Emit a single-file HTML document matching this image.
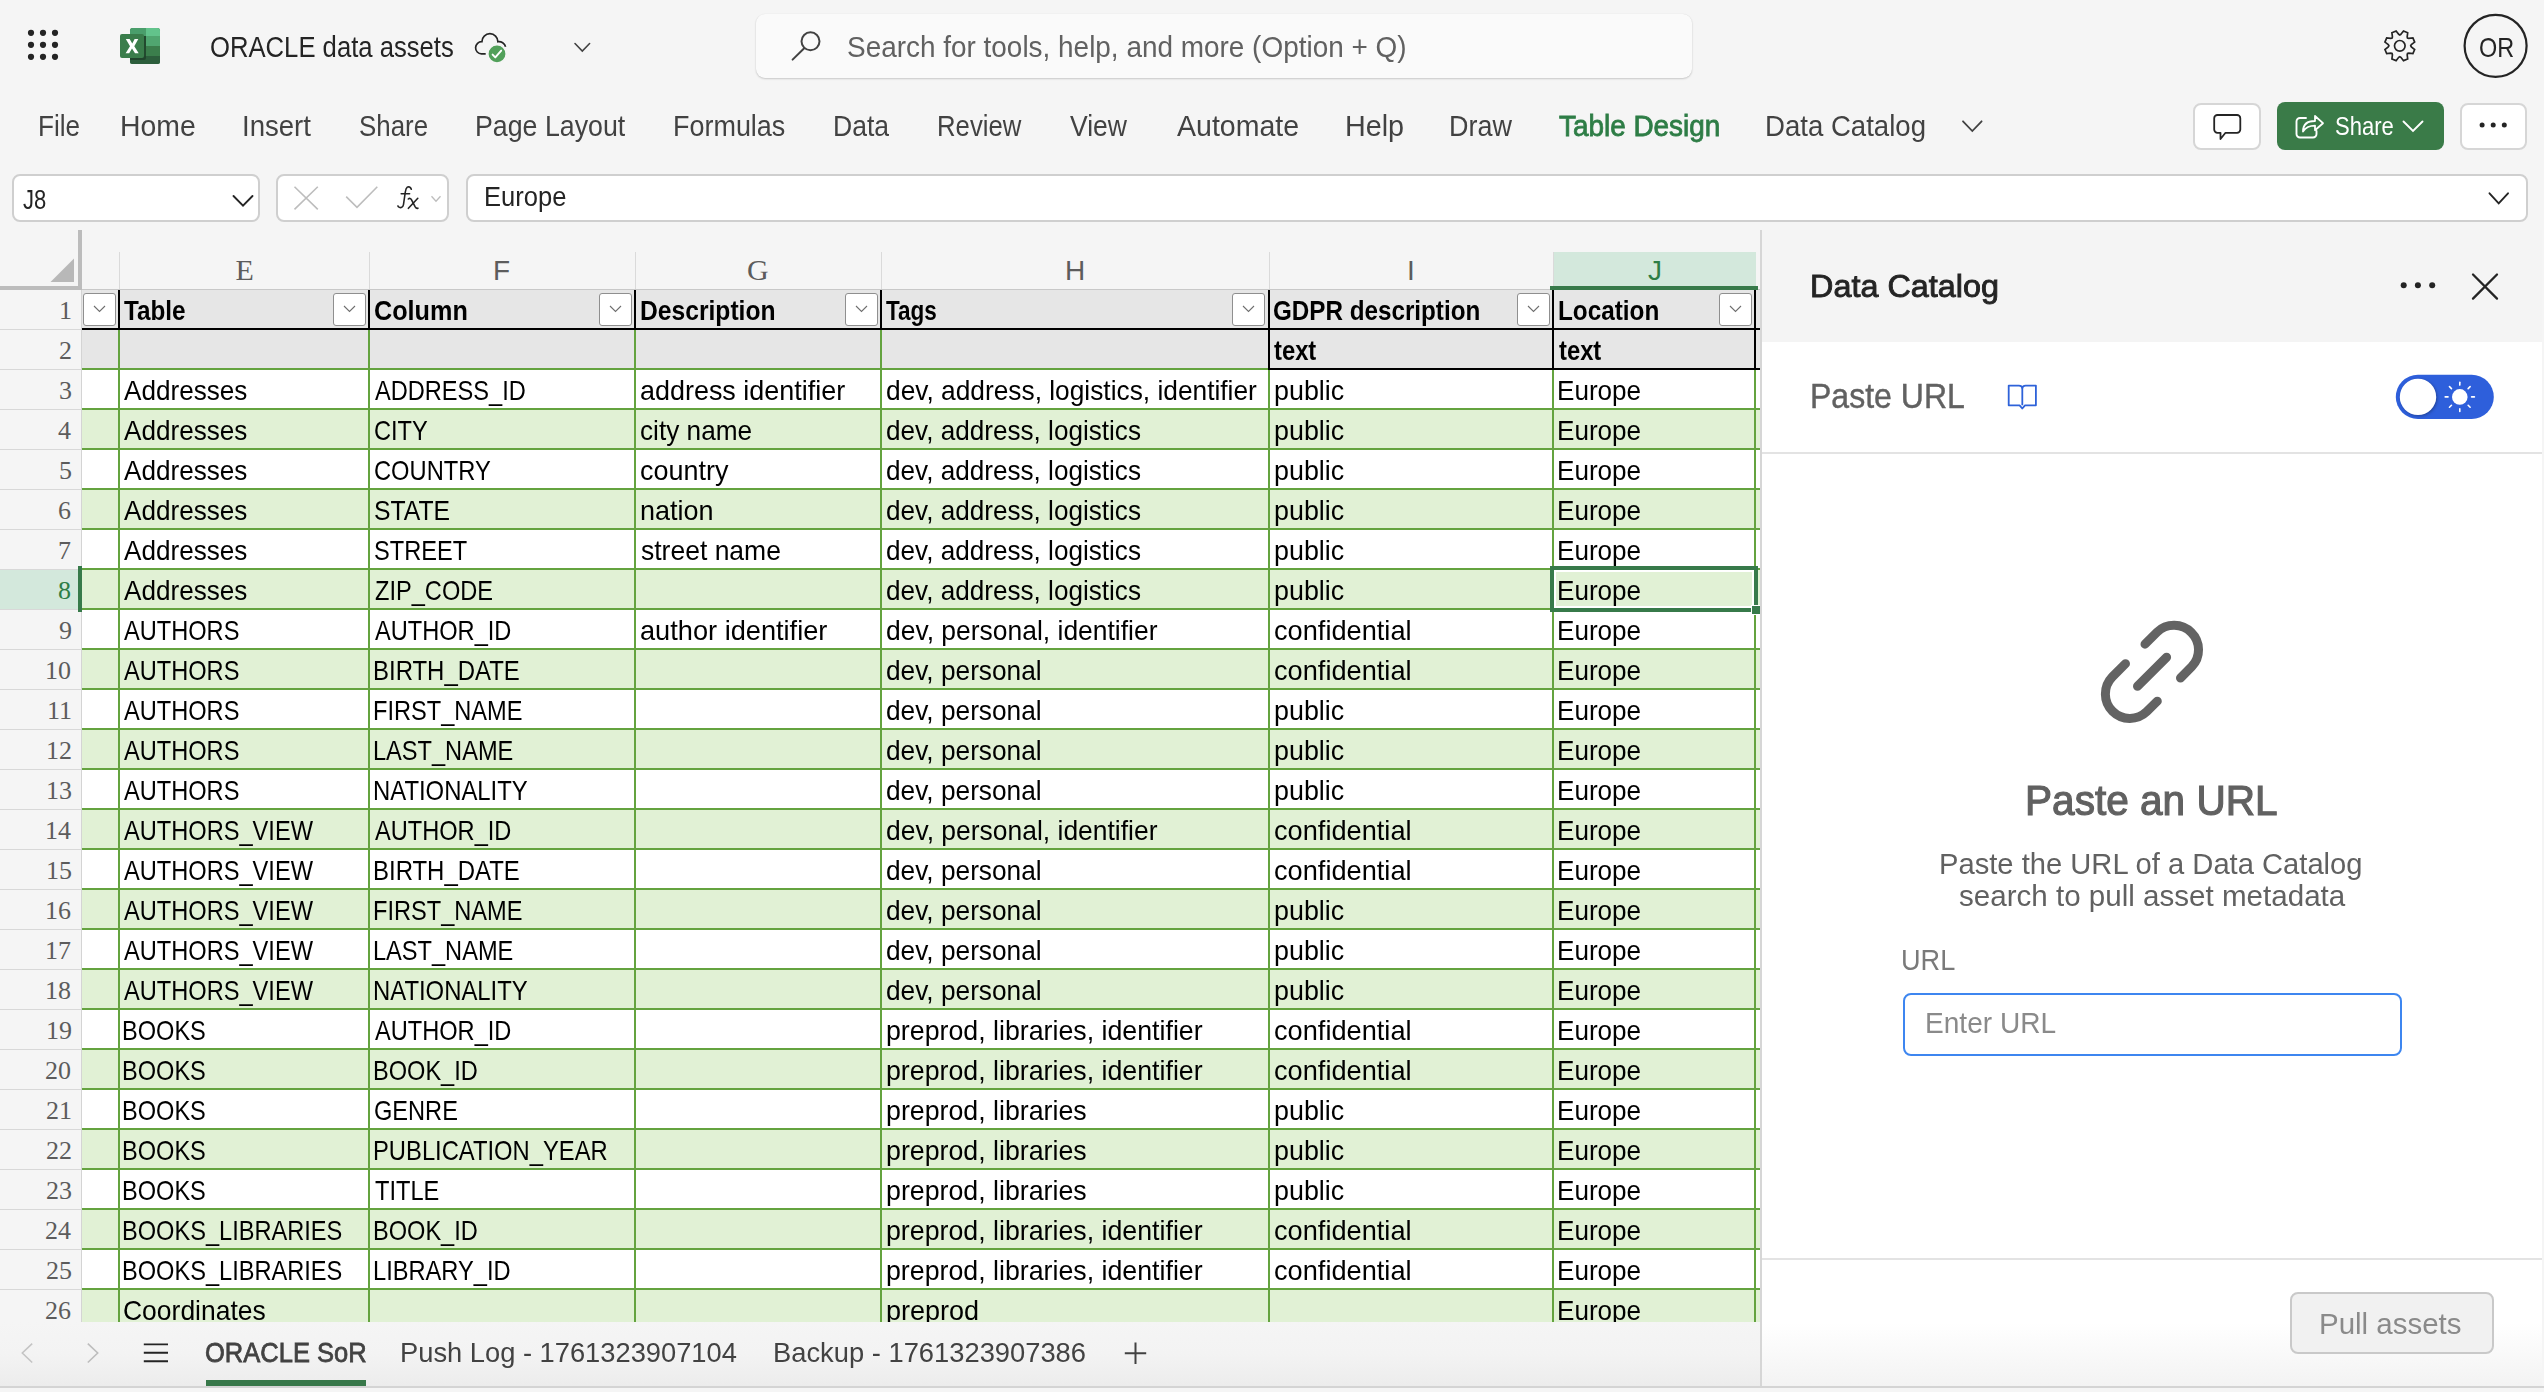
<!DOCTYPE html><html><head><meta charset="utf-8"><style>
html,body{margin:0;padding:0;}
body{width:2544px;height:1392px;overflow:hidden;position:relative;background:#f5f5f5;font-family:"Liberation Sans",sans-serif;}
.t{position:absolute;white-space:nowrap;line-height:1;transform-origin:0 0;}
.r{position:absolute;}
svg{position:absolute;overflow:visible;}
</style></head><body>
<svg style="left:0;top:0" width="80" height="90"><circle cx="31" cy="32.8" r="3.1" fill="#242424"/><circle cx="31" cy="44.8" r="3.1" fill="#242424"/><circle cx="31" cy="56.8" r="3.1" fill="#242424"/><circle cx="43" cy="32.8" r="3.1" fill="#242424"/><circle cx="43" cy="44.8" r="3.1" fill="#242424"/><circle cx="43" cy="56.8" r="3.1" fill="#242424"/><circle cx="55" cy="32.8" r="3.1" fill="#242424"/><circle cx="55" cy="44.8" r="3.1" fill="#242424"/><circle cx="55" cy="56.8" r="3.1" fill="#242424"/></svg>
<svg style="left:0;top:0" width="170" height="80">
<rect x="130" y="28" width="30" height="36" rx="2.5" fill="#3b7e4c"/>
<path d="M132.5 28 H146 V36 H130 V30.5 A2.5 2.5 0 0 1 132.5 28Z" fill="#4a9e6b"/>
<path d="M146 28 H157.5 A2.5 2.5 0 0 1 160 30.5 V36 H146Z" fill="#62c38b"/>
<rect x="146" y="36" width="14" height="10" fill="#50a670"/>
<rect x="146" y="46" width="14" height="10" fill="#3b7e4c"/>
<path d="M130 56 H160 V61.5 A2.5 2.5 0 0 1 157.5 64 H132.5 A2.5 2.5 0 0 1 130 61.5Z" fill="#2c5e3c"/>
<path d="M130 60 H144 A2 2 0 0 0 146 58 V36 H130Z" fill="#1f3f29" opacity=".85"/>
<rect x="120" y="34" width="24" height="24" rx="2" fill="#3a7d4b"/>
<path d="M125.8 39 L129.6 39 L132.3 43.4 L134.6 39 L138.3 39 L134.3 46.2 L138.7 53.2 L135 53.2 L132 48.6 L129.2 53.2 L125.6 53.2 L130 46.2Z" fill="#fff"/>
</svg>
<div class="t" style="left:209.62px;top:33.00px;font-size:29px;color:#242424;font-weight:400;font-family:'Liberation Sans', sans-serif;transform:scaleX(0.8846);">ORACLE data assets</div>
<svg style="left:0;top:0" width="620" height="90">
<path d="M485.7 53.9 L481.5 53.9 A6.1 6.1 0 0 1 481.9 41.7 A8 8 0 0 1 497.9 41.7 A7 7 0 0 1 505.6 46.8" fill="none" stroke="#242424" stroke-width="1.7"/>
<circle cx="497" cy="53.9" r="9.1" fill="#52a05a" stroke="#f5f5f5" stroke-width="1.4"/>
<path d="M492.6 54.6 L495.3 57.4 L501.2 50.6" fill="none" stroke="#fff" stroke-width="1.9" stroke-linecap="round" stroke-linejoin="round"/>
<path d="M575 43.5 L582.3 51 L589.6 43.5" fill="none" stroke="#424242" stroke-width="1.6" stroke-linecap="round"/>
</svg>
<div class="r" style="left:756px;top:13.5px;width:936px;height:64.5px;background:#fafafa;border-radius:9px;box-shadow:0 1px 2px rgba(0,0,0,.18),0 0 1px rgba(0,0,0,.1);"></div>
<svg style="left:0;top:0" width="900" height="90">
<circle cx="810.5" cy="41.3" r="9" fill="none" stroke="#424242" stroke-width="2"/>
<path d="M804.2 48.2 L792.6 59.6" stroke="#424242" stroke-width="2" stroke-linecap="round"/>
</svg>
<div class="t" style="left:846.54px;top:33.00px;font-size:29px;color:#616161;font-weight:400;font-family:'Liberation Sans', sans-serif;transform:scaleX(0.9629);">Search for tools, help, and more (Option + Q)</div>
<svg style="left:0;top:0" width="2544" height="90">
<path d="M2400.91 34.25 L2403.50 30.95 L2407.68 32.69 L2407.18 36.85 L2407.51 38.09 L2408.75 38.42 L2412.91 37.92 L2414.65 42.10 L2411.35 44.69 L2410.70 45.80 L2411.35 46.91 L2414.65 49.50 L2412.91 53.68 L2408.75 53.18 L2407.51 53.51 L2407.18 54.75 L2407.68 58.91 L2403.50 60.65 L2400.91 57.35 L2399.80 56.70 L2398.69 57.35 L2396.10 60.65 L2391.92 58.91 L2392.42 54.75 L2392.09 53.51 L2390.85 53.18 L2386.69 53.68 L2384.95 49.50 L2388.25 46.91 L2388.90 45.80 L2388.25 44.69 L2384.95 42.10 L2386.69 37.92 L2390.85 38.42 L2392.09 38.09 L2392.42 36.85 L2391.92 32.69 L2396.10 30.95 L2398.69 34.25 L2399.80 34.90Z" fill="none" stroke="#242424" stroke-width="1.7" stroke-linejoin="miter"/>
<circle cx="2399.8" cy="45.8" r="5.3" fill="none" stroke="#242424" stroke-width="1.7"/>
<circle cx="2495.6" cy="45.8" r="31" fill="none" stroke="#242424" stroke-width="2.2"/>
</svg>
<div class="t" style="left:2478.91px;top:34.00px;font-size:28px;color:#242424;font-weight:400;font-family:'Liberation Sans', sans-serif;transform:scaleX(0.8371);">OR</div>
<div class="t" style="left:37.90px;top:112.00px;font-size:29px;color:#424242;font-weight:400;font-family:'Liberation Sans', sans-serif;transform:scaleX(0.9014);">File</div>
<div class="t" style="left:120.24px;top:112.00px;font-size:29px;color:#424242;font-weight:400;font-family:'Liberation Sans', sans-serif;transform:scaleX(0.9794);">Home</div>
<div class="t" style="left:242.10px;top:112.00px;font-size:29px;color:#424242;font-weight:400;font-family:'Liberation Sans', sans-serif;transform:scaleX(0.9507);">Insert</div>
<div class="t" style="left:358.71px;top:112.00px;font-size:29px;color:#424242;font-weight:400;font-family:'Liberation Sans', sans-serif;transform:scaleX(0.8929);">Share</div>
<div class="t" style="left:474.85px;top:112.00px;font-size:29px;color:#424242;font-weight:400;font-family:'Liberation Sans', sans-serif;transform:scaleX(0.9229);">Page Layout</div>
<div class="t" style="left:673.34px;top:112.00px;font-size:29px;color:#424242;font-weight:400;font-family:'Liberation Sans', sans-serif;transform:scaleX(0.9294);">Formulas</div>
<div class="t" style="left:832.57px;top:112.00px;font-size:29px;color:#424242;font-weight:400;font-family:'Liberation Sans', sans-serif;transform:scaleX(0.9147);">Data</div>
<div class="t" style="left:936.93px;top:112.00px;font-size:29px;color:#424242;font-weight:400;font-family:'Liberation Sans', sans-serif;transform:scaleX(0.8870);">Review</div>
<div class="t" style="left:1070.40px;top:112.00px;font-size:29px;color:#424242;font-weight:400;font-family:'Liberation Sans', sans-serif;transform:scaleX(0.9150);">View</div>
<div class="t" style="left:1176.50px;top:112.00px;font-size:29px;color:#424242;font-weight:400;font-family:'Liberation Sans', sans-serif;transform:scaleX(0.9837);">Automate</div>
<div class="t" style="left:1344.52px;top:112.00px;font-size:29px;color:#424242;font-weight:400;font-family:'Liberation Sans', sans-serif;transform:scaleX(0.9909);">Help</div>
<div class="t" style="left:1448.64px;top:112.00px;font-size:29px;color:#424242;font-weight:400;font-family:'Liberation Sans', sans-serif;transform:scaleX(0.9291);">Draw</div>
<div class="t" style="left:1765.00px;top:112.00px;font-size:29px;color:#424242;font-weight:400;font-family:'Liberation Sans', sans-serif;transform:scaleX(0.9510);">Data Catalog</div>
<div class="t" style="left:1558.60px;top:112.00px;font-size:29px;color:#2e7d46;font-weight:400;font-family:'Liberation Sans', sans-serif;transform:scaleX(0.9620);-webkit-text-stroke:0.81px #2e7d46;">Table Design</div>
<svg style="left:0;top:0" width="2544" height="230">
<path d="M1963 121.3 L1972.3 131 L1981.6 121.3" fill="none" stroke="#424242" stroke-width="1.8" stroke-linecap="round"/>
</svg>
<div class="r" style="left:2193px;top:102.5px;width:67.5px;height:47px;background:#fff;box-sizing:border-box;border:2px solid #d6d6d6;border-radius:8px;"></div>
<svg style="left:0;top:0" width="2544" height="230">
<path d="M2217.5 115 H2237 A3.3 3.3 0 0 1 2240.3 118.3 V129.5 A3.3 3.3 0 0 1 2237 132.8 H2225.5 L2220.5 139 V132.8 H2217.5 A3.3 3.3 0 0 1 2214.2 129.5 V118.3 A3.3 3.3 0 0 1 2217.5 115Z" fill="none" stroke="#242424" stroke-width="1.8" stroke-linejoin="round"/>
</svg>
<div class="r" style="left:2277.3px;top:102px;width:166.6px;height:47.5px;background:#3a7b48;border-radius:8px;"></div>
<svg style="left:0;top:0" width="2544" height="230">
<path d="M2306 118 H2300 A3.5 3.5 0 0 0 2296.5 121.5 V134 A3.5 3.5 0 0 0 2300 137.5 H2313 A3.5 3.5 0 0 0 2316.5 134 V131" fill="none" stroke="#fff" stroke-width="1.9" stroke-linecap="round"/>
<path d="M2303 131.5 C2303 124 2308 121 2315 121 V116 L2323 123.2 L2315 130.2 V125.6 C2310 125.6 2306 127 2303 131.5Z" fill="none" stroke="#fff" stroke-width="1.8" stroke-linejoin="round"/>
<path d="M2403.5 121.5 L2413 131 L2422.5 121.5" fill="none" stroke="#fff" stroke-width="1.9" stroke-linecap="round"/>
</svg>
<div class="t" style="left:2334.95px;top:113.00px;font-size:26px;color:#ffffff;font-weight:400;font-family:'Liberation Sans', sans-serif;transform:scaleX(0.8466);">Share</div>
<div class="r" style="left:2460px;top:102.5px;width:67px;height:47px;background:#fff;box-sizing:border-box;border:2px solid #d6d6d6;border-radius:8px;"></div>
<svg style="left:0;top:0" width="2544" height="230">
<circle cx="2482.1" cy="125" r="2.5" fill="#242424"/><circle cx="2493.2" cy="125" r="2.5" fill="#242424"/><circle cx="2504.3" cy="125" r="2.5" fill="#242424"/>
</svg>
<div class="r" style="left:12.3px;top:174.3px;width:247.3px;height:47.4px;background:#fff;box-sizing:border-box;border:2px solid #cfcfcf;border-radius:8px;"></div>
<div class="r" style="left:275.8px;top:174px;width:173.7px;height:47.6px;background:#fff;box-sizing:border-box;border:2px solid #cfcfcf;border-radius:8px;"></div>
<div class="r" style="left:466px;top:174px;width:2061.5px;height:47.5px;background:#fff;box-sizing:border-box;border:2px solid #cfcfcf;border-radius:8px;"></div>
<div class="t" style="left:22.50px;top:186.00px;font-size:28px;color:#242424;font-weight:400;font-family:'Liberation Sans', sans-serif;transform:scaleX(0.7862);">J8</div>
<div class="t" style="left:483.98px;top:183.00px;font-size:28px;color:#242424;font-weight:400;font-family:'Liberation Sans', sans-serif;transform:scaleX(0.9120);">Europe</div>
<svg style="left:0;top:0" width="2544" height="230">
<path d="M233.5 196 L243 205.6 L252.5 196" fill="none" stroke="#242424" stroke-width="1.9" stroke-linecap="round"/>
<path d="M294.5 186.8 L317.8 209.4 M317.8 186.8 L294.5 209.4" stroke="#bdbdbd" stroke-width="1.6"/>
<path d="M346.2 196.6 L357 207.3 L377.3 186.8" fill="none" stroke="#bdbdbd" stroke-width="1.6"/>
<g fill="none" stroke="#242424" stroke-width="1.6" stroke-linecap="round"><path d="M411.3 189.3 C410.6 187.1 408.6 186.3 407.3 187.2 C405.9 188.2 405.6 190 405.3 192 L403.5 204.5 C403.1 207 401.1 208.2 399.4 207.4 C398.6 207 398.1 206.5 397.9 205.9"/><path d="M401.2 193.8 H409.6"/><path d="M408.3 199 C409.6 197.9 410.7 198.4 411.4 199.6 L415.2 206.8 C415.9 208 416.9 208.6 417.9 208.2"/><path d="M408.4 208.3 L417.8 198.3"/></g>
<path d="M431.5 196.2 L436 201.2 L440.5 196.2" fill="none" stroke="#bdbdbd" stroke-width="1.3"/>
<path d="M2489.5 193.3 L2498.7 203.3 L2508 193.3" fill="none" stroke="#242424" stroke-width="1.9" stroke-linecap="round"/>
</svg>
<div class="r" style="left:82px;top:290px;width:1678px;height:1032px;background:#ffffff;"></div>
<div class="r" style="left:1553px;top:252px;width:203px;height:34.5px;background:#d3e8dc;"></div>
<div class="r" style="left:369px;top:252px;width:1px;height:37px;background:#dadada;"></div>
<div class="r" style="left:635px;top:252px;width:1px;height:37px;background:#dadada;"></div>
<div class="r" style="left:881px;top:252px;width:1px;height:37px;background:#dadada;"></div>
<div class="r" style="left:1269px;top:252px;width:1px;height:37px;background:#dadada;"></div>
<div class="r" style="left:1553px;top:252px;width:1px;height:37px;background:#dadada;"></div>
<div class="r" style="left:119px;top:252px;width:1px;height:37px;background:#dadada;"></div>
<div class="r" style="left:82px;top:289px;width:1678px;height:1px;background:#c8c8c8;"></div>
<div class="t" style="left:235.50px;top:255.00px;font-size:30px;color:#5c5c5c;font-weight:400;font-family:'Liberation Serif', serif;transform:scaleX(1.0000);">E</div>
<div class="t" style="left:493.00px;top:257.00px;font-size:28px;color:#5c5c5c;font-weight:400;font-family:'Liberation Sans', sans-serif;transform:scaleX(1.0000);">F</div>
<div class="t" style="left:747.00px;top:255.00px;font-size:30px;color:#5c5c5c;font-weight:400;font-family:'Liberation Serif', serif;transform:scaleX(1.0000);">G</div>
<div class="t" style="left:1065.00px;top:257.00px;font-size:28px;color:#5c5c5c;font-weight:400;font-family:'Liberation Sans', sans-serif;transform:scaleX(1.0000);">H</div>
<div class="t" style="left:1407.00px;top:257.00px;font-size:28px;color:#5c5c5c;font-weight:400;font-family:'Liberation Sans', sans-serif;transform:scaleX(1.0000);">I</div>
<div class="t" style="left:1648.00px;top:257.00px;font-size:28px;color:#2e7d46;font-weight:400;font-family:'Liberation Sans', sans-serif;transform:scaleX(1.0000);">J</div>
<div class="r" style="left:1550px;top:286px;width:208px;height:3.5px;background:#377a4a;"></div>
<div class="r" style="left:78px;top:230px;width:3.5px;height:60px;background:#bcbcbc;"></div>
<div class="r" style="left:0px;top:286px;width:81.5px;height:4px;background:#bcbcbc;"></div>
<svg style="left:0;top:0" width="90" height="300"><path d="M50.5 282 L74 282 L74 258.5Z" fill="#b8b8b8"/></svg>
<div class="r" style="left:81px;top:290px;width:1px;height:1032px;background:#d4d4d4;"></div>
<div class="r" style="left:0px;top:328.5px;width:81px;height:1px;background:#d8d8d8;"></div>
<div class="r" style="left:0px;top:368.5px;width:81px;height:1px;background:#d8d8d8;"></div>
<div class="r" style="left:0px;top:408.5px;width:81px;height:1px;background:#d8d8d8;"></div>
<div class="r" style="left:0px;top:448.5px;width:81px;height:1px;background:#d8d8d8;"></div>
<div class="r" style="left:0px;top:488.5px;width:81px;height:1px;background:#d8d8d8;"></div>
<div class="r" style="left:0px;top:528.5px;width:81px;height:1px;background:#d8d8d8;"></div>
<div class="r" style="left:0px;top:568.5px;width:81px;height:1px;background:#d8d8d8;"></div>
<div class="r" style="left:0px;top:570px;width:81px;height:39px;background:#d3e8dc;"></div>
<div class="r" style="left:0px;top:608.5px;width:81px;height:1px;background:#d8d8d8;"></div>
<div class="r" style="left:0px;top:648.5px;width:81px;height:1px;background:#d8d8d8;"></div>
<div class="r" style="left:0px;top:688.5px;width:81px;height:1px;background:#d8d8d8;"></div>
<div class="r" style="left:0px;top:728.5px;width:81px;height:1px;background:#d8d8d8;"></div>
<div class="r" style="left:0px;top:768.5px;width:81px;height:1px;background:#d8d8d8;"></div>
<div class="r" style="left:0px;top:808.5px;width:81px;height:1px;background:#d8d8d8;"></div>
<div class="r" style="left:0px;top:848.5px;width:81px;height:1px;background:#d8d8d8;"></div>
<div class="r" style="left:0px;top:888.5px;width:81px;height:1px;background:#d8d8d8;"></div>
<div class="r" style="left:0px;top:928.5px;width:81px;height:1px;background:#d8d8d8;"></div>
<div class="r" style="left:0px;top:968.5px;width:81px;height:1px;background:#d8d8d8;"></div>
<div class="r" style="left:0px;top:1008.5px;width:81px;height:1px;background:#d8d8d8;"></div>
<div class="r" style="left:0px;top:1048.5px;width:81px;height:1px;background:#d8d8d8;"></div>
<div class="r" style="left:0px;top:1088.5px;width:81px;height:1px;background:#d8d8d8;"></div>
<div class="r" style="left:0px;top:1128.5px;width:81px;height:1px;background:#d8d8d8;"></div>
<div class="r" style="left:0px;top:1168.5px;width:81px;height:1px;background:#d8d8d8;"></div>
<div class="r" style="left:0px;top:1208.5px;width:81px;height:1px;background:#d8d8d8;"></div>
<div class="r" style="left:0px;top:1248.5px;width:81px;height:1px;background:#d8d8d8;"></div>
<div class="r" style="left:0px;top:1288.5px;width:81px;height:1px;background:#d8d8d8;"></div>
<div class="r" style="left:0px;top:1328.5px;width:81px;height:1px;background:#d8d8d8;"></div>
<div class="t" style="left:59.00px;top:298.00px;font-size:26px;color:#5c5c5c;font-weight:400;font-family:'Liberation Serif', serif;transform:scaleX(1.0000);">1</div>
<div class="t" style="left:59.00px;top:338.00px;font-size:26px;color:#5c5c5c;font-weight:400;font-family:'Liberation Serif', serif;transform:scaleX(1.0000);">2</div>
<div class="t" style="left:59.00px;top:378.00px;font-size:26px;color:#5c5c5c;font-weight:400;font-family:'Liberation Serif', serif;transform:scaleX(1.0000);">3</div>
<div class="t" style="left:58.00px;top:418.00px;font-size:26px;color:#5c5c5c;font-weight:400;font-family:'Liberation Serif', serif;transform:scaleX(1.0000);">4</div>
<div class="t" style="left:59.00px;top:458.00px;font-size:26px;color:#5c5c5c;font-weight:400;font-family:'Liberation Serif', serif;transform:scaleX(1.0000);">5</div>
<div class="t" style="left:58.00px;top:498.00px;font-size:26px;color:#5c5c5c;font-weight:400;font-family:'Liberation Serif', serif;transform:scaleX(1.0000);">6</div>
<div class="t" style="left:58.00px;top:538.00px;font-size:26px;color:#5c5c5c;font-weight:400;font-family:'Liberation Serif', serif;transform:scaleX(1.0000);">7</div>
<div class="t" style="left:58.00px;top:578.00px;font-size:26px;color:#2e7d46;font-weight:400;font-family:'Liberation Serif', serif;transform:scaleX(1.0000);">8</div>
<div class="t" style="left:59.00px;top:618.00px;font-size:26px;color:#5c5c5c;font-weight:400;font-family:'Liberation Serif', serif;transform:scaleX(1.0000);">9</div>
<div class="t" style="left:45.00px;top:658.00px;font-size:26px;color:#5c5c5c;font-weight:400;font-family:'Liberation Serif', serif;transform:scaleX(1.0000);">10</div>
<div class="t" style="left:46.96px;top:698.00px;font-size:26px;color:#5c5c5c;font-weight:400;font-family:'Liberation Serif', serif;transform:scaleX(1.0000);">11</div>
<div class="t" style="left:46.00px;top:738.00px;font-size:26px;color:#5c5c5c;font-weight:400;font-family:'Liberation Serif', serif;transform:scaleX(1.0000);">12</div>
<div class="t" style="left:46.00px;top:778.00px;font-size:26px;color:#5c5c5c;font-weight:400;font-family:'Liberation Serif', serif;transform:scaleX(1.0000);">13</div>
<div class="t" style="left:45.00px;top:818.00px;font-size:26px;color:#5c5c5c;font-weight:400;font-family:'Liberation Serif', serif;transform:scaleX(1.0000);">14</div>
<div class="t" style="left:46.00px;top:858.00px;font-size:26px;color:#5c5c5c;font-weight:400;font-family:'Liberation Serif', serif;transform:scaleX(1.0000);">15</div>
<div class="t" style="left:45.00px;top:898.00px;font-size:26px;color:#5c5c5c;font-weight:400;font-family:'Liberation Serif', serif;transform:scaleX(1.0000);">16</div>
<div class="t" style="left:45.00px;top:938.00px;font-size:26px;color:#5c5c5c;font-weight:400;font-family:'Liberation Serif', serif;transform:scaleX(1.0000);">17</div>
<div class="t" style="left:45.00px;top:978.00px;font-size:26px;color:#5c5c5c;font-weight:400;font-family:'Liberation Serif', serif;transform:scaleX(1.0000);">18</div>
<div class="t" style="left:46.00px;top:1018.00px;font-size:26px;color:#5c5c5c;font-weight:400;font-family:'Liberation Serif', serif;transform:scaleX(1.0000);">19</div>
<div class="t" style="left:45.00px;top:1058.00px;font-size:26px;color:#5c5c5c;font-weight:400;font-family:'Liberation Serif', serif;transform:scaleX(1.0000);">20</div>
<div class="t" style="left:46.00px;top:1098.00px;font-size:26px;color:#5c5c5c;font-weight:400;font-family:'Liberation Serif', serif;transform:scaleX(1.0000);">21</div>
<div class="t" style="left:46.00px;top:1138.00px;font-size:26px;color:#5c5c5c;font-weight:400;font-family:'Liberation Serif', serif;transform:scaleX(1.0000);">22</div>
<div class="t" style="left:46.00px;top:1178.00px;font-size:26px;color:#5c5c5c;font-weight:400;font-family:'Liberation Serif', serif;transform:scaleX(1.0000);">23</div>
<div class="t" style="left:45.00px;top:1218.00px;font-size:26px;color:#5c5c5c;font-weight:400;font-family:'Liberation Serif', serif;transform:scaleX(1.0000);">24</div>
<div class="t" style="left:46.00px;top:1258.00px;font-size:26px;color:#5c5c5c;font-weight:400;font-family:'Liberation Serif', serif;transform:scaleX(1.0000);">25</div>
<div class="t" style="left:45.00px;top:1298.00px;font-size:26px;color:#5c5c5c;font-weight:400;font-family:'Liberation Serif', serif;transform:scaleX(1.0000);">26</div>
<div class="r" style="left:77.5px;top:566px;width:4.5px;height:46px;background:#377a4a;"></div>
<div class="r" style="left:82px;top:290px;width:1678px;height:78px;background:#e6e6e6;"></div>
<div class="r" style="left:82px;top:410px;width:1678px;height:40px;background:#e1f1d5;"></div>
<div class="r" style="left:82px;top:490px;width:1678px;height:40px;background:#e1f1d5;"></div>
<div class="r" style="left:82px;top:570px;width:1678px;height:40px;background:#e1f1d5;"></div>
<div class="r" style="left:82px;top:650px;width:1678px;height:40px;background:#e1f1d5;"></div>
<div class="r" style="left:82px;top:730px;width:1678px;height:40px;background:#e1f1d5;"></div>
<div class="r" style="left:82px;top:810px;width:1678px;height:40px;background:#e1f1d5;"></div>
<div class="r" style="left:82px;top:890px;width:1678px;height:40px;background:#e1f1d5;"></div>
<div class="r" style="left:82px;top:970px;width:1678px;height:40px;background:#e1f1d5;"></div>
<div class="r" style="left:82px;top:1050px;width:1678px;height:40px;background:#e1f1d5;"></div>
<div class="r" style="left:82px;top:1130px;width:1678px;height:40px;background:#e1f1d5;"></div>
<div class="r" style="left:82px;top:1210px;width:1678px;height:40px;background:#e1f1d5;"></div>
<div class="r" style="left:82px;top:1290px;width:1678px;height:40px;background:#e1f1d5;"></div>
<div class="r" style="left:82px;top:328px;width:1678px;height:2px;background:#000;"></div>
<div class="r" style="left:82px;top:368px;width:1187px;height:2px;background:#64a33f;"></div>
<div class="r" style="left:1268px;top:368px;width:492px;height:2px;background:#000;"></div>
<div class="r" style="left:82px;top:408px;width:1678px;height:2px;background:#64a33f;"></div>
<div class="r" style="left:82px;top:448px;width:1678px;height:2px;background:#64a33f;"></div>
<div class="r" style="left:82px;top:488px;width:1678px;height:2px;background:#64a33f;"></div>
<div class="r" style="left:82px;top:528px;width:1678px;height:2px;background:#64a33f;"></div>
<div class="r" style="left:82px;top:568px;width:1678px;height:2px;background:#64a33f;"></div>
<div class="r" style="left:82px;top:608px;width:1678px;height:2px;background:#64a33f;"></div>
<div class="r" style="left:82px;top:648px;width:1678px;height:2px;background:#64a33f;"></div>
<div class="r" style="left:82px;top:688px;width:1678px;height:2px;background:#64a33f;"></div>
<div class="r" style="left:82px;top:728px;width:1678px;height:2px;background:#64a33f;"></div>
<div class="r" style="left:82px;top:768px;width:1678px;height:2px;background:#64a33f;"></div>
<div class="r" style="left:82px;top:808px;width:1678px;height:2px;background:#64a33f;"></div>
<div class="r" style="left:82px;top:848px;width:1678px;height:2px;background:#64a33f;"></div>
<div class="r" style="left:82px;top:888px;width:1678px;height:2px;background:#64a33f;"></div>
<div class="r" style="left:82px;top:928px;width:1678px;height:2px;background:#64a33f;"></div>
<div class="r" style="left:82px;top:968px;width:1678px;height:2px;background:#64a33f;"></div>
<div class="r" style="left:82px;top:1008px;width:1678px;height:2px;background:#64a33f;"></div>
<div class="r" style="left:82px;top:1048px;width:1678px;height:2px;background:#64a33f;"></div>
<div class="r" style="left:82px;top:1088px;width:1678px;height:2px;background:#64a33f;"></div>
<div class="r" style="left:82px;top:1128px;width:1678px;height:2px;background:#64a33f;"></div>
<div class="r" style="left:82px;top:1168px;width:1678px;height:2px;background:#64a33f;"></div>
<div class="r" style="left:82px;top:1208px;width:1678px;height:2px;background:#64a33f;"></div>
<div class="r" style="left:82px;top:1248px;width:1678px;height:2px;background:#64a33f;"></div>
<div class="r" style="left:82px;top:1288px;width:1678px;height:2px;background:#64a33f;"></div>
<div class="r" style="left:82px;top:1328px;width:1678px;height:2px;background:#64a33f;"></div>
<div class="r" style="left:118px;top:290px;width:2px;height:40px;background:#000;"></div>
<div class="r" style="left:368px;top:290px;width:2px;height:40px;background:#000;"></div>
<div class="r" style="left:634px;top:290px;width:2px;height:40px;background:#000;"></div>
<div class="r" style="left:880px;top:290px;width:2px;height:40px;background:#000;"></div>
<div class="r" style="left:1268px;top:290px;width:2px;height:40px;background:#000;"></div>
<div class="r" style="left:1552px;top:290px;width:2px;height:40px;background:#000;"></div>
<div class="r" style="left:1754px;top:290px;width:2px;height:40px;background:#000;"></div>
<div class="r" style="left:118px;top:330px;width:2px;height:40px;background:#64a33f;"></div>
<div class="r" style="left:118px;top:370px;width:2px;height:952px;background:#64a33f;"></div>
<div class="r" style="left:368px;top:330px;width:2px;height:40px;background:#64a33f;"></div>
<div class="r" style="left:368px;top:370px;width:2px;height:952px;background:#64a33f;"></div>
<div class="r" style="left:634px;top:330px;width:2px;height:40px;background:#64a33f;"></div>
<div class="r" style="left:634px;top:370px;width:2px;height:952px;background:#64a33f;"></div>
<div class="r" style="left:880px;top:330px;width:2px;height:40px;background:#64a33f;"></div>
<div class="r" style="left:880px;top:370px;width:2px;height:952px;background:#64a33f;"></div>
<div class="r" style="left:1268px;top:330px;width:2px;height:40px;background:#000;"></div>
<div class="r" style="left:1268px;top:370px;width:2px;height:952px;background:#64a33f;"></div>
<div class="r" style="left:1552px;top:330px;width:2px;height:40px;background:#000;"></div>
<div class="r" style="left:1552px;top:370px;width:2px;height:952px;background:#64a33f;"></div>
<div class="r" style="left:1754px;top:330px;width:2px;height:40px;background:#000;"></div>
<div class="r" style="left:1754px;top:370px;width:2px;height:952px;background:#64a33f;"></div>
<div class="t" style="left:123.80px;top:297.00px;font-size:28px;color:#000;font-weight:700;font-family:'Liberation Sans', sans-serif;transform:scaleX(0.8669);">Table</div>
<div class="t" style="left:373.70px;top:297.00px;font-size:28px;color:#000;font-weight:700;font-family:'Liberation Sans', sans-serif;transform:scaleX(0.9001);">Column</div>
<div class="t" style="left:639.72px;top:297.00px;font-size:28px;color:#000;font-weight:700;font-family:'Liberation Sans', sans-serif;transform:scaleX(0.8800);">Description</div>
<div class="t" style="left:885.80px;top:297.00px;font-size:28px;color:#000;font-weight:700;font-family:'Liberation Sans', sans-serif;transform:scaleX(0.8038);">Tags</div>
<div class="t" style="left:1273.34px;top:297.00px;font-size:28px;color:#000;font-weight:700;font-family:'Liberation Sans', sans-serif;transform:scaleX(0.8649);">GDPR description</div>
<div class="t" style="left:1557.63px;top:297.00px;font-size:28px;color:#000;font-weight:700;font-family:'Liberation Sans', sans-serif;transform:scaleX(0.8686);">Location</div>
<div class="t" style="left:1274.20px;top:337.00px;font-size:28px;color:#000;font-weight:700;font-family:'Liberation Sans', sans-serif;transform:scaleX(0.8490);">text</div>
<div class="t" style="left:1558.50px;top:337.00px;font-size:28px;color:#000;font-weight:700;font-family:'Liberation Sans', sans-serif;transform:scaleX(0.8490);">text</div>
<div class="r" style="left:83px;top:293px;width:33px;height:33px;background:#fff;box-sizing:border-box;border:1px solid #8f8f8f;border-radius:3px;"></div>
<svg style="left:0;top:0" width="1" height="1"><path d="M94 306 L99.5 311.5 L105 306" fill="none" stroke="#6e6e6e" stroke-width="1.1"/></svg>
<div class="r" style="left:333px;top:293px;width:33px;height:33px;background:#fff;box-sizing:border-box;border:1px solid #8f8f8f;border-radius:3px;"></div>
<svg style="left:0;top:0" width="1" height="1"><path d="M344 306 L349.5 311.5 L355 306" fill="none" stroke="#6e6e6e" stroke-width="1.1"/></svg>
<div class="r" style="left:599px;top:293px;width:33px;height:33px;background:#fff;box-sizing:border-box;border:1px solid #8f8f8f;border-radius:3px;"></div>
<svg style="left:0;top:0" width="1" height="1"><path d="M610 306 L615.5 311.5 L621 306" fill="none" stroke="#6e6e6e" stroke-width="1.1"/></svg>
<div class="r" style="left:845px;top:293px;width:33px;height:33px;background:#fff;box-sizing:border-box;border:1px solid #8f8f8f;border-radius:3px;"></div>
<svg style="left:0;top:0" width="1" height="1"><path d="M856 306 L861.5 311.5 L867 306" fill="none" stroke="#6e6e6e" stroke-width="1.1"/></svg>
<div class="r" style="left:1232px;top:293px;width:33px;height:33px;background:#fff;box-sizing:border-box;border:1px solid #8f8f8f;border-radius:3px;"></div>
<svg style="left:0;top:0" width="1" height="1"><path d="M1243 306 L1248.5 311.5 L1254 306" fill="none" stroke="#6e6e6e" stroke-width="1.1"/></svg>
<div class="r" style="left:1517px;top:293px;width:33px;height:33px;background:#fff;box-sizing:border-box;border:1px solid #8f8f8f;border-radius:3px;"></div>
<svg style="left:0;top:0" width="1" height="1"><path d="M1528 306 L1533.5 311.5 L1539 306" fill="none" stroke="#6e6e6e" stroke-width="1.1"/></svg>
<div class="r" style="left:1719px;top:293px;width:33px;height:33px;background:#fff;box-sizing:border-box;border:1px solid #8f8f8f;border-radius:3px;"></div>
<svg style="left:0;top:0" width="1" height="1"><path d="M1730 306 L1735.5 311.5 L1741 306" fill="none" stroke="#6e6e6e" stroke-width="1.1"/></svg>
<div class="t" style="left:124.00px;top:377.00px;font-size:28px;color:#000;font-weight:400;font-family:'Liberation Sans', sans-serif;transform:scaleX(0.9324);">Addresses</div>
<div class="t" style="left:375.00px;top:377.00px;font-size:28px;color:#000;font-weight:400;font-family:'Liberation Sans', sans-serif;transform:scaleX(0.8429);">ADDRESS_ID</div>
<div class="t" style="left:640.04px;top:377.00px;font-size:28px;color:#000;font-weight:400;font-family:'Liberation Sans', sans-serif;transform:scaleX(0.9620);">address identifier</div>
<div class="t" style="left:886.06px;top:377.00px;font-size:28px;color:#000;font-weight:400;font-family:'Liberation Sans', sans-serif;transform:scaleX(0.9394);">dev, address, logistics, identifier</div>
<div class="t" style="left:1274.04px;top:377.00px;font-size:28px;color:#000;font-weight:400;font-family:'Liberation Sans', sans-serif;transform:scaleX(0.9603);">public</div>
<div class="t" style="left:1557.14px;top:377.00px;font-size:28px;color:#000;font-weight:400;font-family:'Liberation Sans', sans-serif;transform:scaleX(0.9318);">Europe</div>
<div class="t" style="left:124.00px;top:417.00px;font-size:28px;color:#000;font-weight:400;font-family:'Liberation Sans', sans-serif;transform:scaleX(0.9324);">Addresses</div>
<div class="t" style="left:374.16px;top:417.00px;font-size:28px;color:#000;font-weight:400;font-family:'Liberation Sans', sans-serif;transform:scaleX(0.8427);">CITY</div>
<div class="t" style="left:640.06px;top:417.00px;font-size:28px;color:#000;font-weight:400;font-family:'Liberation Sans', sans-serif;transform:scaleX(0.9360);">city name</div>
<div class="t" style="left:886.07px;top:417.00px;font-size:28px;color:#000;font-weight:400;font-family:'Liberation Sans', sans-serif;transform:scaleX(0.9327);">dev, address, logistics</div>
<div class="t" style="left:1274.04px;top:417.00px;font-size:28px;color:#000;font-weight:400;font-family:'Liberation Sans', sans-serif;transform:scaleX(0.9603);">public</div>
<div class="t" style="left:1557.14px;top:417.00px;font-size:28px;color:#000;font-weight:400;font-family:'Liberation Sans', sans-serif;transform:scaleX(0.9318);">Europe</div>
<div class="t" style="left:124.00px;top:457.00px;font-size:28px;color:#000;font-weight:400;font-family:'Liberation Sans', sans-serif;transform:scaleX(0.9324);">Addresses</div>
<div class="t" style="left:374.15px;top:457.00px;font-size:28px;color:#000;font-weight:400;font-family:'Liberation Sans', sans-serif;transform:scaleX(0.8461);">COUNTRY</div>
<div class="t" style="left:640.04px;top:457.00px;font-size:28px;color:#000;font-weight:400;font-family:'Liberation Sans', sans-serif;transform:scaleX(0.9626);">country</div>
<div class="t" style="left:886.07px;top:457.00px;font-size:28px;color:#000;font-weight:400;font-family:'Liberation Sans', sans-serif;transform:scaleX(0.9327);">dev, address, logistics</div>
<div class="t" style="left:1274.04px;top:457.00px;font-size:28px;color:#000;font-weight:400;font-family:'Liberation Sans', sans-serif;transform:scaleX(0.9603);">public</div>
<div class="t" style="left:1557.14px;top:457.00px;font-size:28px;color:#000;font-weight:400;font-family:'Liberation Sans', sans-serif;transform:scaleX(0.9318);">Europe</div>
<div class="t" style="left:124.00px;top:497.00px;font-size:28px;color:#000;font-weight:400;font-family:'Liberation Sans', sans-serif;transform:scaleX(0.9324);">Addresses</div>
<div class="t" style="left:374.12px;top:497.00px;font-size:28px;color:#000;font-weight:400;font-family:'Liberation Sans', sans-serif;transform:scaleX(0.8837);">STATE</div>
<div class="t" style="left:640.04px;top:497.00px;font-size:28px;color:#000;font-weight:400;font-family:'Liberation Sans', sans-serif;transform:scaleX(0.9636);">nation</div>
<div class="t" style="left:886.07px;top:497.00px;font-size:28px;color:#000;font-weight:400;font-family:'Liberation Sans', sans-serif;transform:scaleX(0.9327);">dev, address, logistics</div>
<div class="t" style="left:1274.04px;top:497.00px;font-size:28px;color:#000;font-weight:400;font-family:'Liberation Sans', sans-serif;transform:scaleX(0.9603);">public</div>
<div class="t" style="left:1557.14px;top:497.00px;font-size:28px;color:#000;font-weight:400;font-family:'Liberation Sans', sans-serif;transform:scaleX(0.9318);">Europe</div>
<div class="t" style="left:124.00px;top:537.00px;font-size:28px;color:#000;font-weight:400;font-family:'Liberation Sans', sans-serif;transform:scaleX(0.9324);">Addresses</div>
<div class="t" style="left:374.16px;top:537.00px;font-size:28px;color:#000;font-weight:400;font-family:'Liberation Sans', sans-serif;transform:scaleX(0.8427);">STREET</div>
<div class="t" style="left:641.00px;top:537.00px;font-size:28px;color:#000;font-weight:400;font-family:'Liberation Sans', sans-serif;transform:scaleX(0.9463);">street name</div>
<div class="t" style="left:886.07px;top:537.00px;font-size:28px;color:#000;font-weight:400;font-family:'Liberation Sans', sans-serif;transform:scaleX(0.9327);">dev, address, logistics</div>
<div class="t" style="left:1274.04px;top:537.00px;font-size:28px;color:#000;font-weight:400;font-family:'Liberation Sans', sans-serif;transform:scaleX(0.9603);">public</div>
<div class="t" style="left:1557.14px;top:537.00px;font-size:28px;color:#000;font-weight:400;font-family:'Liberation Sans', sans-serif;transform:scaleX(0.9318);">Europe</div>
<div class="t" style="left:124.00px;top:577.00px;font-size:28px;color:#000;font-weight:400;font-family:'Liberation Sans', sans-serif;transform:scaleX(0.9324);">Addresses</div>
<div class="t" style="left:375.00px;top:577.00px;font-size:28px;color:#000;font-weight:400;font-family:'Liberation Sans', sans-serif;transform:scaleX(0.8430);">ZIP_CODE</div>
<div class="t" style="left:886.07px;top:577.00px;font-size:28px;color:#000;font-weight:400;font-family:'Liberation Sans', sans-serif;transform:scaleX(0.9327);">dev, address, logistics</div>
<div class="t" style="left:1274.04px;top:577.00px;font-size:28px;color:#000;font-weight:400;font-family:'Liberation Sans', sans-serif;transform:scaleX(0.9603);">public</div>
<div class="t" style="left:1557.14px;top:577.00px;font-size:28px;color:#000;font-weight:400;font-family:'Liberation Sans', sans-serif;transform:scaleX(0.9318);">Europe</div>
<div class="t" style="left:124.00px;top:617.00px;font-size:28px;color:#000;font-weight:400;font-family:'Liberation Sans', sans-serif;transform:scaleX(0.8430);">AUTHORS</div>
<div class="t" style="left:375.00px;top:617.00px;font-size:28px;color:#000;font-weight:400;font-family:'Liberation Sans', sans-serif;transform:scaleX(0.8429);">AUTHOR_ID</div>
<div class="t" style="left:640.03px;top:617.00px;font-size:28px;color:#000;font-weight:400;font-family:'Liberation Sans', sans-serif;transform:scaleX(0.9708);">author identifier</div>
<div class="t" style="left:886.06px;top:617.00px;font-size:28px;color:#000;font-weight:400;font-family:'Liberation Sans', sans-serif;transform:scaleX(0.9445);">dev, personal, identifier</div>
<div class="t" style="left:1274.03px;top:617.00px;font-size:28px;color:#000;font-weight:400;font-family:'Liberation Sans', sans-serif;transform:scaleX(0.9710);">confidential</div>
<div class="t" style="left:1557.14px;top:617.00px;font-size:28px;color:#000;font-weight:400;font-family:'Liberation Sans', sans-serif;transform:scaleX(0.9318);">Europe</div>
<div class="t" style="left:124.00px;top:657.00px;font-size:28px;color:#000;font-weight:400;font-family:'Liberation Sans', sans-serif;transform:scaleX(0.8430);">AUTHORS</div>
<div class="t" style="left:373.29px;top:657.00px;font-size:28px;color:#000;font-weight:400;font-family:'Liberation Sans', sans-serif;transform:scaleX(0.8553);">BIRTH_DATE</div>
<div class="t" style="left:886.06px;top:657.00px;font-size:28px;color:#000;font-weight:400;font-family:'Liberation Sans', sans-serif;transform:scaleX(0.9372);">dev, personal</div>
<div class="t" style="left:1274.03px;top:657.00px;font-size:28px;color:#000;font-weight:400;font-family:'Liberation Sans', sans-serif;transform:scaleX(0.9710);">confidential</div>
<div class="t" style="left:1557.14px;top:657.00px;font-size:28px;color:#000;font-weight:400;font-family:'Liberation Sans', sans-serif;transform:scaleX(0.9318);">Europe</div>
<div class="t" style="left:124.00px;top:697.00px;font-size:28px;color:#000;font-weight:400;font-family:'Liberation Sans', sans-serif;transform:scaleX(0.8430);">AUTHORS</div>
<div class="t" style="left:373.32px;top:697.00px;font-size:28px;color:#000;font-weight:400;font-family:'Liberation Sans', sans-serif;transform:scaleX(0.8424);">FIRST_NAME</div>
<div class="t" style="left:886.06px;top:697.00px;font-size:28px;color:#000;font-weight:400;font-family:'Liberation Sans', sans-serif;transform:scaleX(0.9372);">dev, personal</div>
<div class="t" style="left:1274.04px;top:697.00px;font-size:28px;color:#000;font-weight:400;font-family:'Liberation Sans', sans-serif;transform:scaleX(0.9603);">public</div>
<div class="t" style="left:1557.14px;top:697.00px;font-size:28px;color:#000;font-weight:400;font-family:'Liberation Sans', sans-serif;transform:scaleX(0.9318);">Europe</div>
<div class="t" style="left:124.00px;top:737.00px;font-size:28px;color:#000;font-weight:400;font-family:'Liberation Sans', sans-serif;transform:scaleX(0.8430);">AUTHORS</div>
<div class="t" style="left:373.32px;top:737.00px;font-size:28px;color:#000;font-weight:400;font-family:'Liberation Sans', sans-serif;transform:scaleX(0.8424);">LAST_NAME</div>
<div class="t" style="left:886.06px;top:737.00px;font-size:28px;color:#000;font-weight:400;font-family:'Liberation Sans', sans-serif;transform:scaleX(0.9372);">dev, personal</div>
<div class="t" style="left:1274.04px;top:737.00px;font-size:28px;color:#000;font-weight:400;font-family:'Liberation Sans', sans-serif;transform:scaleX(0.9603);">public</div>
<div class="t" style="left:1557.14px;top:737.00px;font-size:28px;color:#000;font-weight:400;font-family:'Liberation Sans', sans-serif;transform:scaleX(0.9318);">Europe</div>
<div class="t" style="left:124.00px;top:777.00px;font-size:28px;color:#000;font-weight:400;font-family:'Liberation Sans', sans-serif;transform:scaleX(0.8430);">AUTHORS</div>
<div class="t" style="left:373.29px;top:777.00px;font-size:28px;color:#000;font-weight:400;font-family:'Liberation Sans', sans-serif;transform:scaleX(0.8525);">NATIONALITY</div>
<div class="t" style="left:886.06px;top:777.00px;font-size:28px;color:#000;font-weight:400;font-family:'Liberation Sans', sans-serif;transform:scaleX(0.9372);">dev, personal</div>
<div class="t" style="left:1274.04px;top:777.00px;font-size:28px;color:#000;font-weight:400;font-family:'Liberation Sans', sans-serif;transform:scaleX(0.9603);">public</div>
<div class="t" style="left:1557.14px;top:777.00px;font-size:28px;color:#000;font-weight:400;font-family:'Liberation Sans', sans-serif;transform:scaleX(0.9318);">Europe</div>
<div class="t" style="left:124.00px;top:817.00px;font-size:28px;color:#000;font-weight:400;font-family:'Liberation Sans', sans-serif;transform:scaleX(0.8434);">AUTHORS_VIEW</div>
<div class="t" style="left:375.00px;top:817.00px;font-size:28px;color:#000;font-weight:400;font-family:'Liberation Sans', sans-serif;transform:scaleX(0.8429);">AUTHOR_ID</div>
<div class="t" style="left:886.06px;top:817.00px;font-size:28px;color:#000;font-weight:400;font-family:'Liberation Sans', sans-serif;transform:scaleX(0.9445);">dev, personal, identifier</div>
<div class="t" style="left:1274.03px;top:817.00px;font-size:28px;color:#000;font-weight:400;font-family:'Liberation Sans', sans-serif;transform:scaleX(0.9710);">confidential</div>
<div class="t" style="left:1557.14px;top:817.00px;font-size:28px;color:#000;font-weight:400;font-family:'Liberation Sans', sans-serif;transform:scaleX(0.9318);">Europe</div>
<div class="t" style="left:124.00px;top:857.00px;font-size:28px;color:#000;font-weight:400;font-family:'Liberation Sans', sans-serif;transform:scaleX(0.8434);">AUTHORS_VIEW</div>
<div class="t" style="left:373.29px;top:857.00px;font-size:28px;color:#000;font-weight:400;font-family:'Liberation Sans', sans-serif;transform:scaleX(0.8553);">BIRTH_DATE</div>
<div class="t" style="left:886.06px;top:857.00px;font-size:28px;color:#000;font-weight:400;font-family:'Liberation Sans', sans-serif;transform:scaleX(0.9372);">dev, personal</div>
<div class="t" style="left:1274.03px;top:857.00px;font-size:28px;color:#000;font-weight:400;font-family:'Liberation Sans', sans-serif;transform:scaleX(0.9710);">confidential</div>
<div class="t" style="left:1557.14px;top:857.00px;font-size:28px;color:#000;font-weight:400;font-family:'Liberation Sans', sans-serif;transform:scaleX(0.9318);">Europe</div>
<div class="t" style="left:124.00px;top:897.00px;font-size:28px;color:#000;font-weight:400;font-family:'Liberation Sans', sans-serif;transform:scaleX(0.8434);">AUTHORS_VIEW</div>
<div class="t" style="left:373.32px;top:897.00px;font-size:28px;color:#000;font-weight:400;font-family:'Liberation Sans', sans-serif;transform:scaleX(0.8424);">FIRST_NAME</div>
<div class="t" style="left:886.06px;top:897.00px;font-size:28px;color:#000;font-weight:400;font-family:'Liberation Sans', sans-serif;transform:scaleX(0.9372);">dev, personal</div>
<div class="t" style="left:1274.04px;top:897.00px;font-size:28px;color:#000;font-weight:400;font-family:'Liberation Sans', sans-serif;transform:scaleX(0.9603);">public</div>
<div class="t" style="left:1557.14px;top:897.00px;font-size:28px;color:#000;font-weight:400;font-family:'Liberation Sans', sans-serif;transform:scaleX(0.9318);">Europe</div>
<div class="t" style="left:124.00px;top:937.00px;font-size:28px;color:#000;font-weight:400;font-family:'Liberation Sans', sans-serif;transform:scaleX(0.8434);">AUTHORS_VIEW</div>
<div class="t" style="left:373.32px;top:937.00px;font-size:28px;color:#000;font-weight:400;font-family:'Liberation Sans', sans-serif;transform:scaleX(0.8424);">LAST_NAME</div>
<div class="t" style="left:886.06px;top:937.00px;font-size:28px;color:#000;font-weight:400;font-family:'Liberation Sans', sans-serif;transform:scaleX(0.9372);">dev, personal</div>
<div class="t" style="left:1274.04px;top:937.00px;font-size:28px;color:#000;font-weight:400;font-family:'Liberation Sans', sans-serif;transform:scaleX(0.9603);">public</div>
<div class="t" style="left:1557.14px;top:937.00px;font-size:28px;color:#000;font-weight:400;font-family:'Liberation Sans', sans-serif;transform:scaleX(0.9318);">Europe</div>
<div class="t" style="left:124.00px;top:977.00px;font-size:28px;color:#000;font-weight:400;font-family:'Liberation Sans', sans-serif;transform:scaleX(0.8434);">AUTHORS_VIEW</div>
<div class="t" style="left:373.29px;top:977.00px;font-size:28px;color:#000;font-weight:400;font-family:'Liberation Sans', sans-serif;transform:scaleX(0.8525);">NATIONALITY</div>
<div class="t" style="left:886.06px;top:977.00px;font-size:28px;color:#000;font-weight:400;font-family:'Liberation Sans', sans-serif;transform:scaleX(0.9372);">dev, personal</div>
<div class="t" style="left:1274.04px;top:977.00px;font-size:28px;color:#000;font-weight:400;font-family:'Liberation Sans', sans-serif;transform:scaleX(0.9603);">public</div>
<div class="t" style="left:1557.14px;top:977.00px;font-size:28px;color:#000;font-weight:400;font-family:'Liberation Sans', sans-serif;transform:scaleX(0.9318);">Europe</div>
<div class="t" style="left:122.32px;top:1017.00px;font-size:28px;color:#000;font-weight:400;font-family:'Liberation Sans', sans-serif;transform:scaleX(0.8417);">BOOKS</div>
<div class="t" style="left:375.00px;top:1017.00px;font-size:28px;color:#000;font-weight:400;font-family:'Liberation Sans', sans-serif;transform:scaleX(0.8429);">AUTHOR_ID</div>
<div class="t" style="left:886.04px;top:1017.00px;font-size:28px;color:#000;font-weight:400;font-family:'Liberation Sans', sans-serif;transform:scaleX(0.9551);">preprod, libraries, identifier</div>
<div class="t" style="left:1274.03px;top:1017.00px;font-size:28px;color:#000;font-weight:400;font-family:'Liberation Sans', sans-serif;transform:scaleX(0.9710);">confidential</div>
<div class="t" style="left:1557.14px;top:1017.00px;font-size:28px;color:#000;font-weight:400;font-family:'Liberation Sans', sans-serif;transform:scaleX(0.9318);">Europe</div>
<div class="t" style="left:122.32px;top:1057.00px;font-size:28px;color:#000;font-weight:400;font-family:'Liberation Sans', sans-serif;transform:scaleX(0.8417);">BOOKS</div>
<div class="t" style="left:373.32px;top:1057.00px;font-size:28px;color:#000;font-weight:400;font-family:'Liberation Sans', sans-serif;transform:scaleX(0.8418);">BOOK_ID</div>
<div class="t" style="left:886.04px;top:1057.00px;font-size:28px;color:#000;font-weight:400;font-family:'Liberation Sans', sans-serif;transform:scaleX(0.9551);">preprod, libraries, identifier</div>
<div class="t" style="left:1274.03px;top:1057.00px;font-size:28px;color:#000;font-weight:400;font-family:'Liberation Sans', sans-serif;transform:scaleX(0.9710);">confidential</div>
<div class="t" style="left:1557.14px;top:1057.00px;font-size:28px;color:#000;font-weight:400;font-family:'Liberation Sans', sans-serif;transform:scaleX(0.9318);">Europe</div>
<div class="t" style="left:122.32px;top:1097.00px;font-size:28px;color:#000;font-weight:400;font-family:'Liberation Sans', sans-serif;transform:scaleX(0.8417);">BOOKS</div>
<div class="t" style="left:374.16px;top:1097.00px;font-size:28px;color:#000;font-weight:400;font-family:'Liberation Sans', sans-serif;transform:scaleX(0.8423);">GENRE</div>
<div class="t" style="left:886.04px;top:1097.00px;font-size:28px;color:#000;font-weight:400;font-family:'Liberation Sans', sans-serif;transform:scaleX(0.9554);">preprod, libraries</div>
<div class="t" style="left:1274.04px;top:1097.00px;font-size:28px;color:#000;font-weight:400;font-family:'Liberation Sans', sans-serif;transform:scaleX(0.9603);">public</div>
<div class="t" style="left:1557.14px;top:1097.00px;font-size:28px;color:#000;font-weight:400;font-family:'Liberation Sans', sans-serif;transform:scaleX(0.9318);">Europe</div>
<div class="t" style="left:122.32px;top:1137.00px;font-size:28px;color:#000;font-weight:400;font-family:'Liberation Sans', sans-serif;transform:scaleX(0.8417);">BOOKS</div>
<div class="t" style="left:373.30px;top:1137.00px;font-size:28px;color:#000;font-weight:400;font-family:'Liberation Sans', sans-serif;transform:scaleX(0.8490);">PUBLICATION_YEAR</div>
<div class="t" style="left:886.04px;top:1137.00px;font-size:28px;color:#000;font-weight:400;font-family:'Liberation Sans', sans-serif;transform:scaleX(0.9554);">preprod, libraries</div>
<div class="t" style="left:1274.04px;top:1137.00px;font-size:28px;color:#000;font-weight:400;font-family:'Liberation Sans', sans-serif;transform:scaleX(0.9603);">public</div>
<div class="t" style="left:1557.14px;top:1137.00px;font-size:28px;color:#000;font-weight:400;font-family:'Liberation Sans', sans-serif;transform:scaleX(0.9318);">Europe</div>
<div class="t" style="left:122.32px;top:1177.00px;font-size:28px;color:#000;font-weight:400;font-family:'Liberation Sans', sans-serif;transform:scaleX(0.8417);">BOOKS</div>
<div class="t" style="left:375.00px;top:1177.00px;font-size:28px;color:#000;font-weight:400;font-family:'Liberation Sans', sans-serif;transform:scaleX(0.8428);">TITLE</div>
<div class="t" style="left:886.04px;top:1177.00px;font-size:28px;color:#000;font-weight:400;font-family:'Liberation Sans', sans-serif;transform:scaleX(0.9554);">preprod, libraries</div>
<div class="t" style="left:1274.04px;top:1177.00px;font-size:28px;color:#000;font-weight:400;font-family:'Liberation Sans', sans-serif;transform:scaleX(0.9603);">public</div>
<div class="t" style="left:1557.14px;top:1177.00px;font-size:28px;color:#000;font-weight:400;font-family:'Liberation Sans', sans-serif;transform:scaleX(0.9318);">Europe</div>
<div class="t" style="left:122.31px;top:1217.00px;font-size:28px;color:#000;font-weight:400;font-family:'Liberation Sans', sans-serif;transform:scaleX(0.8427);">BOOKS_LIBRARIES</div>
<div class="t" style="left:373.32px;top:1217.00px;font-size:28px;color:#000;font-weight:400;font-family:'Liberation Sans', sans-serif;transform:scaleX(0.8418);">BOOK_ID</div>
<div class="t" style="left:886.04px;top:1217.00px;font-size:28px;color:#000;font-weight:400;font-family:'Liberation Sans', sans-serif;transform:scaleX(0.9551);">preprod, libraries, identifier</div>
<div class="t" style="left:1274.03px;top:1217.00px;font-size:28px;color:#000;font-weight:400;font-family:'Liberation Sans', sans-serif;transform:scaleX(0.9710);">confidential</div>
<div class="t" style="left:1557.14px;top:1217.00px;font-size:28px;color:#000;font-weight:400;font-family:'Liberation Sans', sans-serif;transform:scaleX(0.9318);">Europe</div>
<div class="t" style="left:122.31px;top:1257.00px;font-size:28px;color:#000;font-weight:400;font-family:'Liberation Sans', sans-serif;transform:scaleX(0.8427);">BOOKS_LIBRARIES</div>
<div class="t" style="left:373.31px;top:1257.00px;font-size:28px;color:#000;font-weight:400;font-family:'Liberation Sans', sans-serif;transform:scaleX(0.8448);">LIBRARY_ID</div>
<div class="t" style="left:886.04px;top:1257.00px;font-size:28px;color:#000;font-weight:400;font-family:'Liberation Sans', sans-serif;transform:scaleX(0.9551);">preprod, libraries, identifier</div>
<div class="t" style="left:1274.03px;top:1257.00px;font-size:28px;color:#000;font-weight:400;font-family:'Liberation Sans', sans-serif;transform:scaleX(0.9710);">confidential</div>
<div class="t" style="left:1557.14px;top:1257.00px;font-size:28px;color:#000;font-weight:400;font-family:'Liberation Sans', sans-serif;transform:scaleX(0.9318);">Europe</div>
<div class="t" style="left:123.05px;top:1297.00px;font-size:28px;color:#000;font-weight:400;font-family:'Liberation Sans', sans-serif;transform:scaleX(0.9456);">Coordinates</div>
<div class="t" style="left:886.04px;top:1297.00px;font-size:28px;color:#000;font-weight:400;font-family:'Liberation Sans', sans-serif;transform:scaleX(0.9646);">preprod</div>
<div class="t" style="left:1557.14px;top:1297.00px;font-size:28px;color:#000;font-weight:400;font-family:'Liberation Sans', sans-serif;transform:scaleX(0.9318);">Europe</div>
<div class="r" style="left:1550px;top:566px;width:208px;height:46px;background:transparent;box-sizing:border-box;border:4px solid #377a4a;"></div>
<div class="r" style="left:1554px;top:570px;width:200px;height:38px;background:transparent;box-sizing:border-box;border:2px solid #fff;"></div>
<div class="r" style="left:1752px;top:606px;width:8px;height:8px;background:#377a4a;outline:1.5px solid #fff;"></div>
<div class="r" style="left:0px;top:1322px;width:1760px;height:64px;background:linear-gradient(#f5f5f5, #f3f3f3 50%, #ececec);"></div>
<svg style="left:0;top:0" width="1760" height="1392">
<path d="M32.2 1343.6 L22.3 1353 L32.2 1362.5" fill="none" stroke="#c4c4c4" stroke-width="1.6"/>
<path d="M87.8 1343.6 L97.7 1353 L87.8 1362.5" fill="none" stroke="#bdbdbd" stroke-width="1.6"/>
<path d="M143.8 1344.4 H168 M143.8 1352.8 H168 M143.8 1361.2 H168" stroke="#242424" stroke-width="1.9"/>
<path d="M1135.5 1342.5 V1364 M1124.8 1353.3 H1146.2" stroke="#424242" stroke-width="2"/>
</svg>
<div class="t" style="left:205.09px;top:1339.00px;font-size:28px;color:#424242;font-weight:400;font-family:'Liberation Sans', sans-serif;transform:scaleX(0.9111);-webkit-text-stroke:0.78px #424242;">ORACLE SoR</div>
<div class="r" style="left:206px;top:1380px;width:160px;height:6px;background:#38784a;"></div>
<div class="t" style="left:400.45px;top:1339.00px;font-size:28px;color:#424242;font-weight:400;font-family:'Liberation Sans', sans-serif;transform:scaleX(0.9747);">Push Log - 1761323907104</div>
<div class="t" style="left:772.55px;top:1339.00px;font-size:28px;color:#424242;font-weight:400;font-family:'Liberation Sans', sans-serif;transform:scaleX(0.9760);">Backup - 1761323907386</div>
<div class="r" style="left:0px;top:1386px;width:2544px;height:2px;background:#d4d4d4;"></div>
<div class="r" style="left:0px;top:1388px;width:2544px;height:4px;background:#f5f5f5;"></div>
<div class="r" style="left:1760px;top:230px;width:2px;height:1156px;background:#d6d6d6;"></div>
<div class="r" style="left:1762px;top:230px;width:782px;height:112px;background:#f4f4f4;"></div>
<div class="r" style="left:1762px;top:342px;width:782px;height:1044px;background:#ffffff;"></div>
<div class="t" style="left:1809.91px;top:271.00px;font-size:31px;color:#242424;font-weight:400;font-family:'Liberation Sans', sans-serif;transform:scaleX(1.0444);-webkit-text-stroke:0.87px #242424;">Data Catalog</div>
<svg style="left:0;top:0" width="2544" height="1392">
<circle cx="2403.7" cy="285.3" r="3" fill="#242424"/><circle cx="2417.9" cy="285.3" r="3" fill="#242424"/><circle cx="2432.2" cy="285.3" r="3" fill="#242424"/>
<path d="M2473 274.5 L2497 298.6 M2497 274.5 L2473 298.6" stroke="#242424" stroke-width="2.3" stroke-linecap="round"/>
</svg>
<div class="t" style="left:1810.20px;top:379.00px;font-size:35.5px;color:#616161;font-weight:400;font-family:'Liberation Sans', sans-serif;transform:scaleX(0.9022);-webkit-text-stroke:0.45px #616161;">Paste URL</div>
<svg style="left:0;top:0" width="2544" height="1392">
<path d="M2008.7 385.6 H2019 C2020.5 385.6 2022 386.5 2022.3 388 C2022.6 386.5 2024 385.6 2025.6 385.6 H2035.9 V405.3 H2025 L2022.3 408.5 L2019.6 405.3 H2008.7Z" fill="none" stroke="#2e62d9" stroke-width="1.8" stroke-linejoin="round"/>
<path d="M2022.3 388 V405.3" stroke="#2e62d9" stroke-width="1.8"/>
<rect x="2395.8" y="374.8" width="98" height="44.2" rx="22.1" fill="#2e5fdb"/>
<circle cx="2418" cy="396.9" r="18.2" fill="#fff" style="filter:drop-shadow(1px 1px 1.5px rgba(0,0,0,.3))"/>
<circle cx="2459.8" cy="396.9" r="7.8" fill="#fff"/>
</svg>
<svg style="left:0;top:0" width="2544" height="1392"><path d="M2471.60 396.90 L2474.40 396.90" stroke="#fff" stroke-width="1.6" stroke-linecap="round"/><path d="M2468.14 405.24 L2470.12 407.22" stroke="#fff" stroke-width="1.6" stroke-linecap="round"/><path d="M2459.80 408.70 L2459.80 411.50" stroke="#fff" stroke-width="1.6" stroke-linecap="round"/><path d="M2451.46 405.24 L2449.48 407.22" stroke="#fff" stroke-width="1.6" stroke-linecap="round"/><path d="M2448.00 396.90 L2445.20 396.90" stroke="#fff" stroke-width="1.6" stroke-linecap="round"/><path d="M2451.46 388.56 L2449.48 386.58" stroke="#fff" stroke-width="1.6" stroke-linecap="round"/><path d="M2459.80 385.10 L2459.80 382.30" stroke="#fff" stroke-width="1.6" stroke-linecap="round"/><path d="M2468.14 388.56 L2470.12 386.58" stroke="#fff" stroke-width="1.6" stroke-linecap="round"/></svg>
<div class="r" style="left:1762px;top:452px;width:782px;height:2px;background:#e3e3e3;"></div>
<svg style="left:0;top:0" width="2544" height="1392">
<g fill="none" stroke="#636363" stroke-width="9" stroke-linecap="round">
<path d="M2145.00 644.15 L2157.08 632.08 A24.5 24.5 0 0 1 2191.72 666.72 L2180.50 677.95"/>
<path d="M2125.50 663.65 L2112.18 676.98 A24.5 24.5 0 0 0 2146.82 711.62 L2157.30 701.15"/>
<path d="M2137.50 686.30 L2166.60 657.20"/>
</g></svg>
<div class="t" style="left:2024.90px;top:780.00px;font-size:42px;color:#616161;font-weight:400;font-family:'Liberation Sans', sans-serif;transform:scaleX(0.9661);-webkit-text-stroke:1.18px #616161;">Paste an URL</div>
<div class="t" style="left:1939.26px;top:849.00px;font-size:30px;color:#616161;font-weight:400;font-family:'Liberation Sans', sans-serif;transform:scaleX(0.9718);">Paste the URL of a Data Catalog</div>
<div class="t" style="left:1958.80px;top:881.00px;font-size:30px;color:#616161;font-weight:400;font-family:'Liberation Sans', sans-serif;transform:scaleX(0.9857);">search to pull asset metadata</div>
<div class="t" style="left:1900.83px;top:946.00px;font-size:29px;color:#7a7a7a;font-weight:400;font-family:'Liberation Sans', sans-serif;transform:scaleX(0.9358);">URL</div>
<div class="r" style="left:1902.5px;top:992.5px;width:499px;height:63px;background:#fff;box-sizing:border-box;border:2px solid #3d86f0;border-radius:8px;"></div>
<div class="t" style="left:1925.06px;top:1009.00px;font-size:29px;color:#8a8a8a;font-weight:400;font-family:'Liberation Sans', sans-serif;transform:scaleX(0.9681);">Enter URL</div>
<div class="r" style="left:1762px;top:1258px;width:782px;height:2px;background:#e3e3e3;"></div>
<div class="r" style="left:1762px;top:1260px;width:782px;height:126px;background:linear-gradient(#ffffff 0%, #ffffff 50%, #f3f3f3 100%);"></div>
<div class="r" style="left:2542px;top:230px;width:2px;height:1156px;background:#f5f5f5;"></div>
<div class="r" style="left:2290px;top:1291.5px;width:204px;height:62.5px;background:#f1f1f1;box-sizing:border-box;border:2px solid #c9c9c9;border-radius:8px;"></div>
<div class="t" style="left:2319.47px;top:1310.00px;font-size:29px;color:#8a8a8a;font-weight:400;font-family:'Liberation Sans', sans-serif;transform:scaleX(1.0165);">Pull assets</div>
</body></html>
